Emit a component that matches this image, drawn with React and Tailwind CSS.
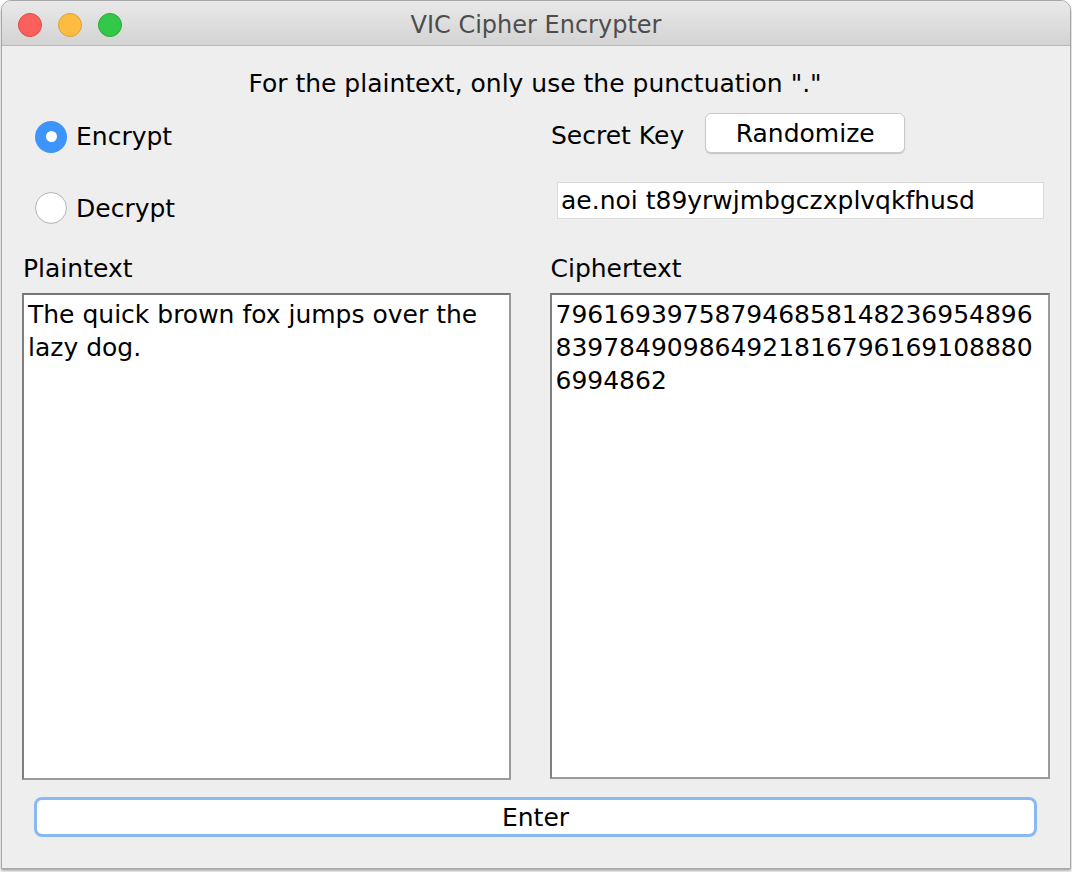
import { useState } from "react";

const font = { fontFamily: '"DejaVu Sans", "Noto Sans", sans-serif' };

function Radio({ checked, label, onClick }) {
  return (
    <label className="flex items-center gap-[9px] cursor-pointer" onClick={onClick}>
      {checked ? (
        <span className="w-[32px] h-[32px] rounded-full bg-[#3d95fb] flex items-center justify-center">
          <span className="w-[11px] h-[11px] rounded-full bg-white" />
        </span>
      ) : (
        <span className="w-[32px] h-[32px] rounded-full bg-white border border-[#b5b5b5] shadow-[inset_0_-1px_1px_rgba(0,0,0,0.05)]" />
      )}
      <span>{label}</span>
    </label>
  );
}

export default function App() {
  const [mode, setMode] = useState("encrypt");
  const [key, setKey] = useState("ae.noi t89yrwjmbgczxplvqkfhusd");
  const [plain, setPlain] = useState("The quick brown fox jumps over the lazy dog.");
  const [cipher, setCipher] = useState(
    "7961693975879468581482369548968397849098649218167961691088806994862"
  );

  return (
    <div className="w-[1072px] h-[872px] bg-white" style={font}>
      <div className="h-[869px] w-[1070px] ml-px flex flex-col bg-[#eeeeee] rounded-t-[10px] border border-[#a8a8a8] shadow-[0_2px_3px_rgba(0,0,0,0.35)] overflow-hidden text-[25px] text-black">
        {/* Title bar */}
        <div className="h-[45px] shrink-0 flex items-center relative pt-[3px] bg-gradient-to-b from-[#e9e9e9] to-[#d3d3d3] border-b border-[#b9b9b9]">
          <div className="flex gap-[16px] pl-[16px]">
            <span className="w-[24px] h-[24px] rounded-full bg-[#fc605c] border border-[#de4a45]" />
            <span className="w-[24px] h-[24px] rounded-full bg-[#fdbc40] border border-[#dea135]" />
            <span className="w-[24px] h-[24px] rounded-full bg-[#34c84a] border border-[#27aa35]" />
          </div>
          <div className="absolute inset-0 pt-[3px] flex items-center justify-center text-[24px] text-[#4d4d4d] pointer-events-none">
            VIC Cipher Encrypter
          </div>
        </div>

        {/* Content */}
        <div className="flex-1 flex flex-col pt-[20px] px-[20px]">
          <div className="text-center leading-[36px] pr-[2px]">
            For the plaintext, only use the punctuation "."
          </div>

          <div className="flex mt-[2px] h-[118px]">
            <div className="w-[529px] flex flex-col gap-[34px] pl-[13px] pt-[14px]">
              <Radio checked={mode === "encrypt"} label="Encrypt" onClick={() => setMode("encrypt")} />
              <Radio checked={mode === "decrypt"} label="Decrypt" onClick={() => setMode("decrypt")} />
            </div>
            <div className="flex-1 flex flex-col">
              <div className="flex items-start gap-[21px] pt-[9px]">
                <span className="leading-[36px] mt-[5px]">Secret Key</span>
                <button
                  onClick={() =>
                    setKey(
                      "abcdefghijklmnopqrstuvwxyz. "
                        .split("")
                        .sort(() => Math.random() - 0.5)
                        .join("")
                    )
                  }
                  className="w-[200px] h-[40px] bg-white rounded-[6px] border border-[#c8c8c8] shadow-[0_1px_1px_rgba(0,0,0,0.18)] leading-none"
                >
                  Randomize
                </button>
              </div>
              <input
                value={key}
                onChange={(e) => setKey(e.target.value)}
                className="mt-[28px] ml-[6px] w-[487px] h-[37px] bg-white border border-[#dadada] px-[3px] outline-none"
              />
            </div>
          </div>

          <div className="flex gap-[39px] mt-[30px]">
            <div className="w-[489px] flex flex-col">
              <div className="leading-[34px] pl-[1px]">Plaintext</div>
              <textarea
                value={plain}
                onChange={(e) => setPlain(e.target.value)}
                className="mt-[7px] h-[487px] resize-none bg-white border-2 border-[#9a9a9a] border-t-[#767676] border-l-[#7e7e7e] px-[4px] pt-[3px] leading-[33px] outline-none"
              />
            </div>
            <div className="w-[501px] flex flex-col">
              <div className="leading-[34px] pl-[1px]">Ciphertext</div>
              <textarea
                value={cipher}
                onChange={(e) => setCipher(e.target.value)}
                className="mt-[7px] h-[486px] resize-none bg-white border-2 border-[#9a9a9a] border-t-[#767676] border-l-[#7e7e7e] px-[4px] pt-[3px] leading-[33px] outline-none break-all"
              />
            </div>
          </div>

          <button className="mt-[17px] ml-[12px] w-[1003px] h-[40px] bg-white rounded-[8px] border-[3px] border-[#8ab8f1] leading-none">
            Enter
          </button>
        </div>
      </div>
    </div>
  );
}
